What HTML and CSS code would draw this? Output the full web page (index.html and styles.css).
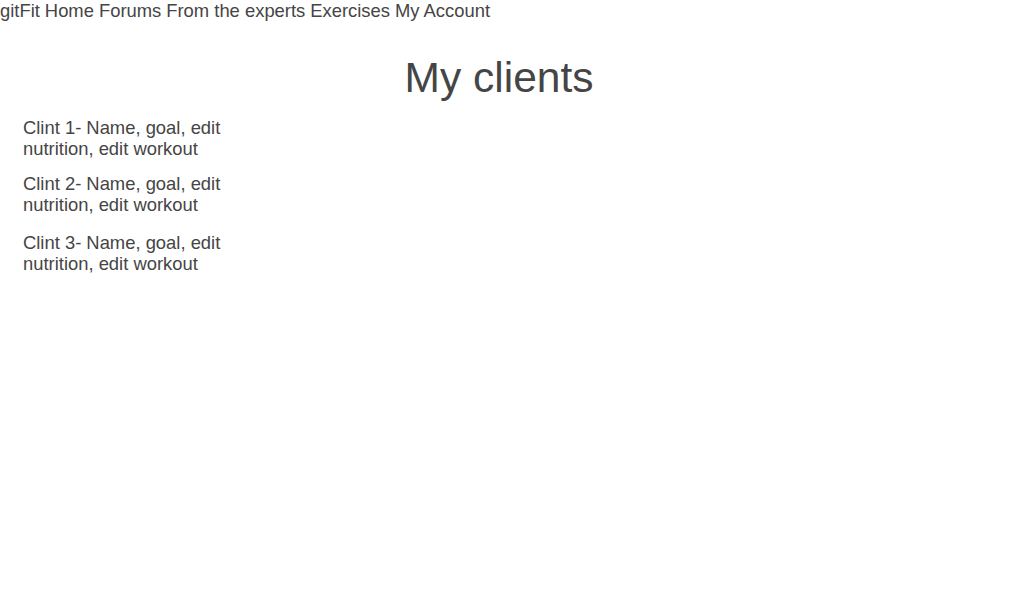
FILE: index.html
```html
<!DOCTYPE html>
<html>
<head>
<meta charset="utf-8">
<link rel="stylesheet" href="styles.css">
</head>
<body>
<nav class="nav">
  <span>gitFit</span>
  <a href="#">Home</a>
  <a href="#">Forums</a>
  <a href="#">From the experts</a>
  <a href="#">Exercises</a>
  <a href="#">My Account</a>
</nav>
<main class="main">
  <h1 class="title">My clients</h1>
  <ul class="clients">
    <li class="client">Clint 1- Name, goal, edit nutrition, edit workout</li>
    <li class="client">Clint 2- Name, goal, edit nutrition, edit workout</li>
    <li class="client client-last">Clint 3- Name, goal, edit nutrition, edit workout</li>
  </ul>
</main>
</body>
</html>
```
FILE: styles.css
```css
html, body {
  margin: 0;
  padding: 0;
  background: #fff;
}
body {
  font-family: "Liberation Sans", Arial, sans-serif;
  color: #454545;
  font-size: 18.4px;
}
.nav {
  display: flex;
  gap: 5px;
  line-height: 22px;
  font-size: 18.4px;
}
.nav a {
  color: #454545;
  text-decoration: none;
}
.main {
  width: 998px;
}
.title {
  text-align: center;
  font-weight: normal;
  font-size: 42.5px;
  line-height: 48px;
  margin: 32px 0 15px;
}
.clients {
  list-style: none;
  margin: 0;
  padding: 0 0 0 23px;
  display: flex;
  flex-direction: column;
  gap: 14px;
}
.client {
  width: 210px;
  line-height: 21px;
}
.client-last {
  margin-top: 3px;
}
```
